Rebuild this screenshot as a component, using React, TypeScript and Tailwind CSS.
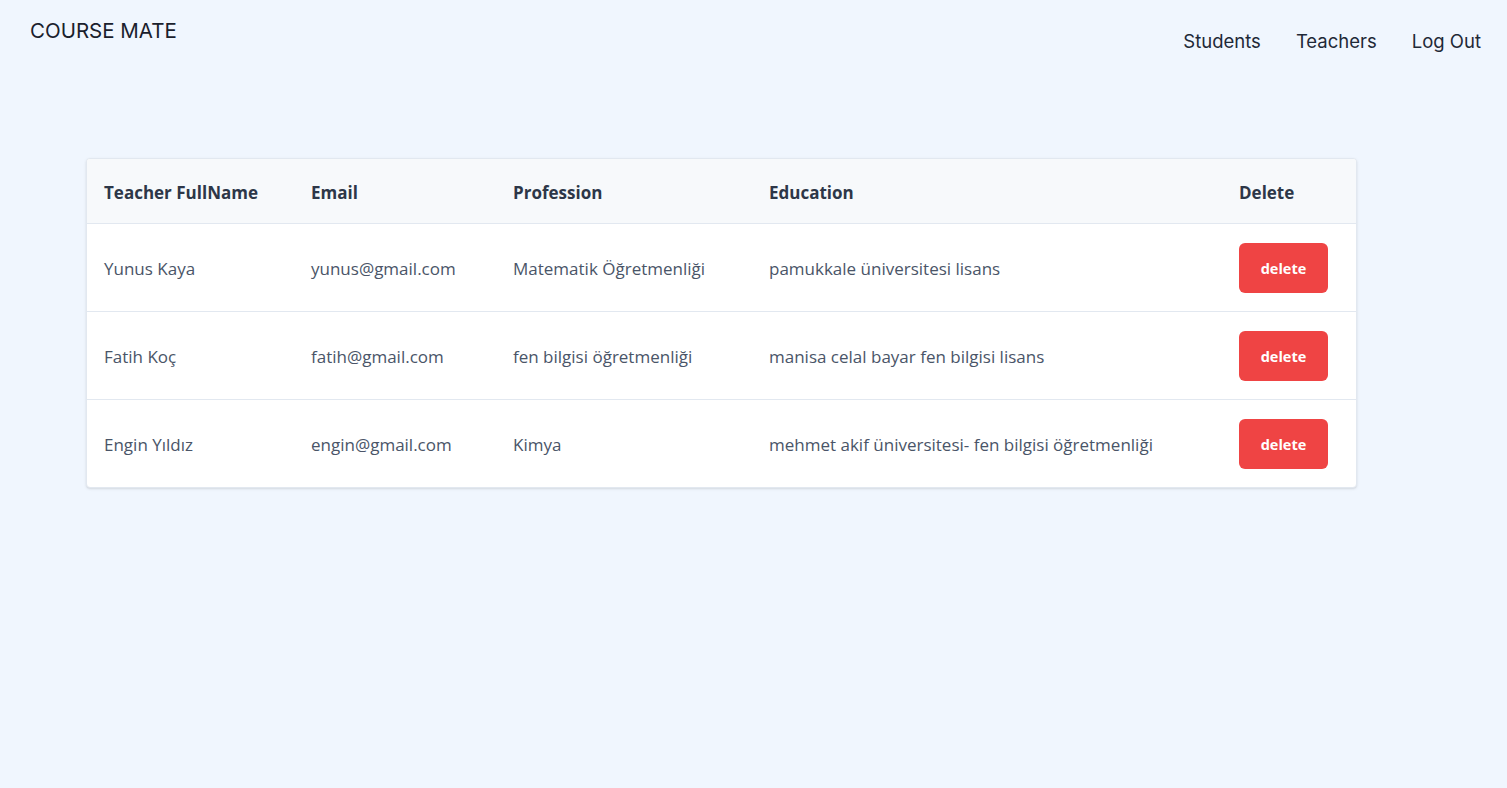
import React from 'react';

interface Teacher {
  name: string;
  email: string;
  profession: string;
  education: string;
}

const teachers: Teacher[] = [
  { name: 'Yunus Kaya', email: 'yunus@gmail.com', profession: 'Matematik Öğretmenliği', education: 'pamukkale üniversitesi lisans' },
  { name: 'Fatih Koç', email: 'fatih@gmail.com', profession: 'fen bilgisi öğretmenliği', education: 'manisa celal bayar fen bilgisi lisans' },
  { name: 'Engin Yıldız', email: 'engin@gmail.com', profession: 'Kimya', education: 'mehmet akif üniversitesi- fen bilgisi öğretmenliği' },
];

function Navbar() {
  return (
    <header className="flex items-start justify-between pl-[30px] pr-[26px] pt-[18px] font-['Inter',sans-serif]">
      <div className="text-[20.5px] leading-[26px] text-[#1a202c]">COURSE MATE</div>
      <nav className="mt-[10px] flex gap-[35px] text-[18.5px] leading-[26px] text-[#1f2937]">
        <a href="#">Students</a>
        <a href="#">Teachers</a>
        <a href="#">Log Out</a>
      </nav>
    </header>
  );
}

function TeachersTable() {
  return (
    <div className="mx-[86px] mt-[104px] w-[1271px] overflow-hidden rounded border border-[#e2e8f0] bg-white shadow-sm">
      <table className="w-full table-fixed border-collapse text-left font-['Open_Sans','Noto_Sans',sans-serif] text-[17px]">
        <colgroup>
          <col className="w-[208px]" />
          <col className="w-[202px]" />
          <col className="w-[256px]" />
          <col className="w-[470px]" />
          <col />
        </colgroup>
        <thead className="bg-[#f7f9fb]">
          <tr className="border-b border-[#e2e8f0]">
            <th className="pb-[18px] pl-[17px] pr-4 pt-[22px] font-bold leading-6 text-[#2d3748]">Teacher FullName</th>
            <th className="px-4 pb-[18px] pt-[22px] font-bold leading-6 text-[#2d3748]">Email</th>
            <th className="px-4 pb-[18px] pt-[22px] font-bold leading-6 text-[#2d3748]">Profession</th>
            <th className="px-4 pb-[18px] pt-[22px] font-bold leading-6 text-[#2d3748]">Education</th>
            <th className="px-4 pb-[18px] pt-[22px] font-bold leading-6 text-[#2d3748]">Delete</th>
          </tr>
        </thead>
        <tbody>
          {teachers.map((t, i) => (
            <tr key={t.email} className={i < teachers.length - 1 ? 'border-b border-[#e2e8f0]' : ''}>
              <td className="pb-[17px] pl-[17px] pr-4 pt-[20px] leading-6 text-[#4a5568]">{t.name}</td>
              <td className="px-4 pb-[17px] pt-[20px] leading-6 text-[#4a5568]">{t.email}</td>
              <td className="px-4 pb-[17px] pt-[20px] leading-6 text-[#4a5568]">{t.profession}</td>
              <td className="px-4 pb-[17px] pt-[20px] leading-6 text-[#4a5568]">{t.education}</td>
              <td className="px-4 pb-[18px] pt-[19px]">
                <button className="flex h-[50px] w-[89px] items-center justify-center rounded-md bg-[#ef4444] pt-px text-[14.5px] font-bold text-white">
                  delete
                </button>
              </td>
            </tr>
          ))}
        </tbody>
      </table>
    </div>
  );
}

export default function App() {
  return (
    <div className="min-h-[788px] bg-[#f0f6fe]">
      <Navbar />
      <TeachersTable />
    </div>
  );
}
